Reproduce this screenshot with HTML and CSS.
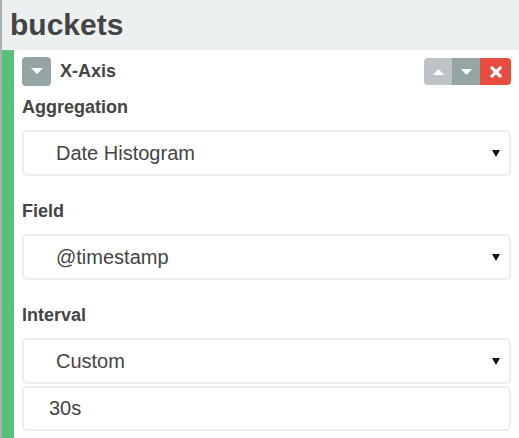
FILE: index.html
```html
<!DOCTYPE html>
<html>
<head>
<meta charset="utf-8">
<link rel="stylesheet" href="styles.css">
</head>
<body>
<div class="panel">
  <div class="header">buckets</div>
  <div class="agg">
    <div class="agg-bar"></div>
    <div class="agg-body">
      <div class="agg-head">
        <button class="toggle"><svg width="12" height="7" viewBox="0 0 12 7"><path d="M0 0h12L6 6z" fill="#fff"/></svg></button>
        <span class="agg-title">X-Axis</span>
        <div class="controls">
          <span class="ctl up"><svg width="11" height="6" viewBox="0 0 11 6"><path d="M0 6h11L5.5 0z" fill="#fff"/></svg></span>
          <span class="ctl down"><svg width="11" height="6" viewBox="0 0 11 6"><path d="M0 0h11L5.5 6z" fill="#fff"/></svg></span>
          <span class="ctl remove"><svg width="12" height="12" viewBox="0 0 12 12"><path d="M2 2L10 10M10 2L2 10" stroke="#fff" stroke-width="3.2" stroke-linecap="square"/></svg></span>
        </div>
      </div>
      <div class="group">
        <div class="label">Aggregation</div>
        <div class="select"><span>Date Histogram</span><svg class="arrow" width="8" height="7" viewBox="0 0 8 7"><path d="M0 0h8L4 7z" fill="#111"/></svg></div>
      </div>
      <div class="group">
        <div class="label">Field</div>
        <div class="select"><span>@timestamp</span><svg class="arrow" width="8" height="7" viewBox="0 0 8 7"><path d="M0 0h8L4 7z" fill="#111"/></svg></div>
      </div>
      <div class="group last">
        <div class="label">Interval</div>
        <div class="select"><span>Custom</span><svg class="arrow" width="8" height="7" viewBox="0 0 8 7"><path d="M0 0h8L4 7z" fill="#111"/></svg></div>
        <div class="input">30s</div>
      </div>
    </div>
  </div>
</div>
</body>
</html>
```
FILE: styles.css
```css
html, body {
  margin: 0;
  padding: 0;
  background: #fff;
}
body {
  font-family: "Liberation Sans", Arial, sans-serif;
  color: #444;
  width: 519px;
  height: 438px;
  overflow: hidden;
}
.panel {
  border-left: 2px solid #a9b0b3;
  height: 438px;
  box-sizing: border-box;
}
.header {
  height: 50px;
  line-height: 50px;
  background: #ecf0f1;
  font-size: 30px;
  font-weight: bold;
  padding-left: 8px;
  color: #444;
}
.agg {
  display: flex;
  height: 388px;
}
.agg-bar {
  width: 12px;
  background: #57c17b;
  flex: none;
}
.agg-body {
  flex: 1;
  padding: 7px 8px 0 8px;
}
.agg-head {
  display: flex;
  align-items: center;
  height: 29px;
}
.toggle {
  width: 29px;
  height: 29px;
  border: none;
  border-radius: 4px;
  background: #95a5a6;
  padding: 0;
  display: flex;
  align-items: center;
  justify-content: center;
}
.agg-title {
  font-size: 18px;
  font-weight: bold;
  margin-left: 9px;
  flex: 1;
}
.controls {
  display: flex;
  height: 27px;
  border-radius: 4px;
  overflow: hidden;
  align-self: flex-start;
  margin-top: 1px;
}
.ctl {
  width: 28px;
  display: flex;
  align-items: center;
  justify-content: center;
}
.ctl.up { background: #bdc3c7; }
.ctl.down { background: #95a5a6; }
.ctl.remove { background: #e74c3c; width: 31px; }
.group {
  margin-top: 9px;
}
.group + .group {
  margin-top: 23px;
}
.label {
  font-size: 18px;
  font-weight: bold;
  line-height: 24px;
  margin-bottom: 11px;
}
.select, .input {
  height: 46px;
  box-sizing: border-box;
  border: 2px solid #eaeeef;
  border-radius: 5px;
  display: flex;
  align-items: center;
  font-size: 20px;
  color: #444;
}
.select {
  padding: 0 9px 0 32px;
  justify-content: space-between;
}
.arrow {
  flex: none;
}
.input {
  margin-top: 2px;
  height: 45px;
  padding-left: 25px;
}
```
